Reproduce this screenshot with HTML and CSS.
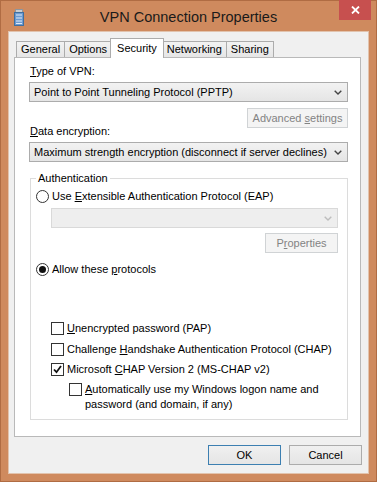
FILE: index.html
```html
<!DOCTYPE html>
<html>
<head>
<meta charset="utf-8">
<link rel="stylesheet" href="styles.css">
</head>
<body>
<div class="window">
  <div class="titlebar">
    <div class="ticon">
      <svg width="10" height="17" viewBox="0 0 10 17">
        <rect x="1.5" y="0.5" width="7" height="3" fill="#c9cdd2" stroke="#8d959e"/>
        <rect x="0.5" y="3.5" width="9" height="13" fill="#6c9bd2" stroke="#3f6f9f"/>
        <line x1="2" y1="6" x2="8" y2="6" stroke="#dfeaf6"/>
        <line x1="2" y1="9" x2="8" y2="9" stroke="#dfeaf6"/>
        <line x1="2" y1="12" x2="8" y2="12" stroke="#dfeaf6"/>
        <line x1="2" y1="14.5" x2="8" y2="14.5" stroke="#dfeaf6"/>
      </svg>
    </div>
    <div class="title">VPN Connection Properties</div>
    <div class="closecell">
      <div class="close">
        <svg width="9" height="8" viewBox="0 0 9 8"><path d="M1 0.5 L8 7.5 M8 0.5 L1 7.5" stroke="#fff" stroke-width="1.8"/></svg>
      </div>
    </div>
  </div>
  <div class="client">
    <div class="tabs">
      <div class="tab">General</div>
      <div class="tab">Options</div>
      <div class="tab sel">Security</div>
      <div class="tab">Networking</div>
      <div class="tab">Sharing</div>
    </div>
    <div class="panel">
      <div class="lbl"><u>T</u>ype of VPN:</div>
      <div class="combo">
        <span>Point to Point Tunneling Protocol (PPTP)</span>
        <svg class="chev" width="8" height="5" viewBox="0 0 8 5"><path d="M0.7 0.7 L4 4 L7.3 0.7" fill="none" stroke="#444" stroke-width="1.4"/></svg>
      </div>
      <div class="btn dis adv"><span>Advanced <u>s</u>ettings</span></div>
      <div class="lbl lbl2"><u>D</u>ata encryption:</div>
      <div class="combo">
        <span>Maximum strength encryption (disconnect if server declines)</span>
        <svg class="chev" width="8" height="5" viewBox="0 0 8 5"><path d="M0.7 0.7 L4 4 L7.3 0.7" fill="none" stroke="#444" stroke-width="1.4"/></svg>
      </div>
      <fieldset class="group">
        <legend>Authentication</legend>
        <div class="row r1"><span class="radio"></span><span>Use <u>E</u>xtensible Authentication Protocol (EAP)</span></div>
        <div class="combo discombo">
          <span></span>
          <svg class="chev" width="8" height="5" viewBox="0 0 8 5"><path d="M0.7 0.7 L4 4 L7.3 0.7" fill="none" stroke="#bdbdbd" stroke-width="1.4"/></svg>
        </div>
        <div class="btn dis props"><span>P<u>r</u>operties</span></div>
        <div class="row r2"><span class="radio on"></span><span>Allow these <u>p</u>rotocols</span></div>
        <div class="row c1"><span class="check"></span><span><u>U</u>nencrypted password (PAP)</span></div>
        <div class="row c2"><span class="check"></span><span>Challenge <u>H</u>andshake Authentication Protocol (CHAP)</span></div>
        <div class="row c3"><span class="check"><svg width="11" height="11" viewBox="0 0 11 11"><path d="M2 5.5 L4.5 8.2 L9 2" fill="none" stroke="#111" stroke-width="1.8"/></svg></span><span>Microsoft <u>C</u>HAP Version 2 (MS-CHAP v2)</span></div>
        <div class="row c4"><span class="check"></span><span class="two"><u>A</u>utomatically use my Windows logon name and<br>password (and domain, if any)</span></div>
      </fieldset>
    </div>
    <div class="buttons">
      <div class="btn def"><span>OK</span></div>
      <div class="btn"><span>Cancel</span></div>
    </div>
  </div>
</div>
</body>
</html>
```
FILE: styles.css
```css
* { box-sizing: border-box; }
html, body { margin: 0; padding: 0; }
body {
  width: 377px;
  height: 482px;
  overflow: hidden;
  font-family: "Liberation Sans", Arial, sans-serif;
  font-size: 11px;
  color: #000;
}
.window {
  width: 377px;
  height: 482px;
  background: #cf8a5e;
  border: 1px solid #b06c43;
  display: flex;
  flex-direction: column;
}
.titlebar {
  height: 30px;
  display: grid;
  grid-template-columns: 1fr auto 1fr;
  align-items: center;
}
.ticon {
  justify-self: start;
  padding-left: 13px;
  display: flex;
  margin-top: 1px;
}
.title {
  font-size: 14.5px;
  color: #1a1a1a;
  line-height: 30px;
  padding-top: 1px;
}
.closecell {
  justify-self: end;
  align-self: start;
  padding-right: 5px;
}
.close {
  width: 32px;
  height: 20px;
  margin-top: -1px;
  background: #c7504f;
  display: flex;
  align-items: center;
  justify-content: center;
}
.client {
  margin: 0 7px;
  height: 443px;
  background: #f0f0f0;
  border: 1px solid #e2c3ad;
  padding: 6px 7px 0 5px;
}
.tabs {
  display: flex;
  align-items: flex-end;
  height: 20px;
  margin-bottom: -1px;
  padding-left: 2px;
}
.tab {
  height: 16px;
  line-height: 15px;
  padding: 0 4px;
  border: 1px solid #acacac;
  border-bottom: none;
  margin-bottom: 1px;
  background: linear-gradient(#f2f2f2, #e6e6e6);
  white-space: nowrap;
}
.tab + .tab { margin-left: -1px; }
.tab.sel {
  height: 20px;
  line-height: 18px;
  margin: 0 -2px;
  padding: 0 6px;
  background: #fff;
  position: relative;
  z-index: 1;
  margin-bottom: 0;
}
.tab.sel + .tab { margin-left: 0; }
.panel {
  height: 380px;
  background: #fff;
  border: 1px solid #b9b9b9;
  padding: 6px 12px 0 14px;
  display: flex;
  flex-direction: column;
}
.lbl {
  height: 15px;
  line-height: 15px;
  padding-left: 1px;
  margin-bottom: 3px;
}
.lbl2 { margin-top: -4px; }
.combo {
  height: 20px;
  border: 1px solid #acacac;
  background: linear-gradient(#f2f2f2, #e5e5e5);
  display: flex;
  align-items: center;
  justify-content: space-between;
  padding: 0 4px 0 4px;
  white-space: nowrap;
}
.chev { flex: none; margin-right: 1px; }
.btn {
  width: 73px;
  height: 20px;
  border: 1px solid #acacac;
  background: linear-gradient(#f0f0f0, #e5e5e5);
  display: flex;
  align-items: center;
  justify-content: center;
  white-space: nowrap;
}
.btn.dis {
  color: #838383;
  background: #f4f4f4;
  border-color: #d0d3d5;
}
.btn.def { border-color: #3c7fb1; }
.adv {
  width: 101px;
  margin-top: 6px;
  align-self: flex-end;
}
.group {
  margin: 8px 0 0 1px;
  padding: 0 9px 7px 5px;
  border: 1px solid #dcdcdc;
  min-width: 0;
  display: flex;
  flex-direction: column;
}
.group legend {
  padding: 0 2px;
  line-height: 16px;
  height: 16px;
}
.row {
  display: flex;
  align-items: center;
  height: 15px;
  line-height: 15px;
  white-space: nowrap;
}
.radio {
  width: 13px;
  height: 13px;
  border: 1px solid #333;
  border-radius: 50%;
  background: #fff;
  margin-right: 3px;
  flex: none;
  display: flex;
  align-items: center;
  justify-content: center;
}
.radio.on::after {
  content: "";
  width: 7px;
  height: 7px;
  border-radius: 50%;
  background: #111;
}
.check {
  width: 13px;
  height: 13px;
  border: 1px solid #333;
  background: #fff;
  margin-right: 3px;
  flex: none;
  display: flex;
  align-items: center;
  justify-content: center;
}
.r1 { margin-top: 3px; }
.discombo {
  margin: 4px 0 0 15px;
  background: #eeeeee;
  border-color: #d9d9d9;
}
.props {
  margin-top: 5px;
  align-self: flex-end;
}
.r2 { margin-top: 9px; }
.c1 { margin: 44px 0 0 15px; }
.c2 { margin: 6px 0 0 15px; }
.c3 { margin: 5px 0 0 15px; }
.c4 {
  margin: 5px 0 0 33px;
  height: 30px;
  align-items: flex-start;
}
.c4 .check { margin-top: 1px; }
.two { line-height: 15px; }
.buttons {
  display: flex;
  justify-content: flex-end;
  gap: 8px;
  margin-top: 8px;
  margin-right: -1px;
}
```
